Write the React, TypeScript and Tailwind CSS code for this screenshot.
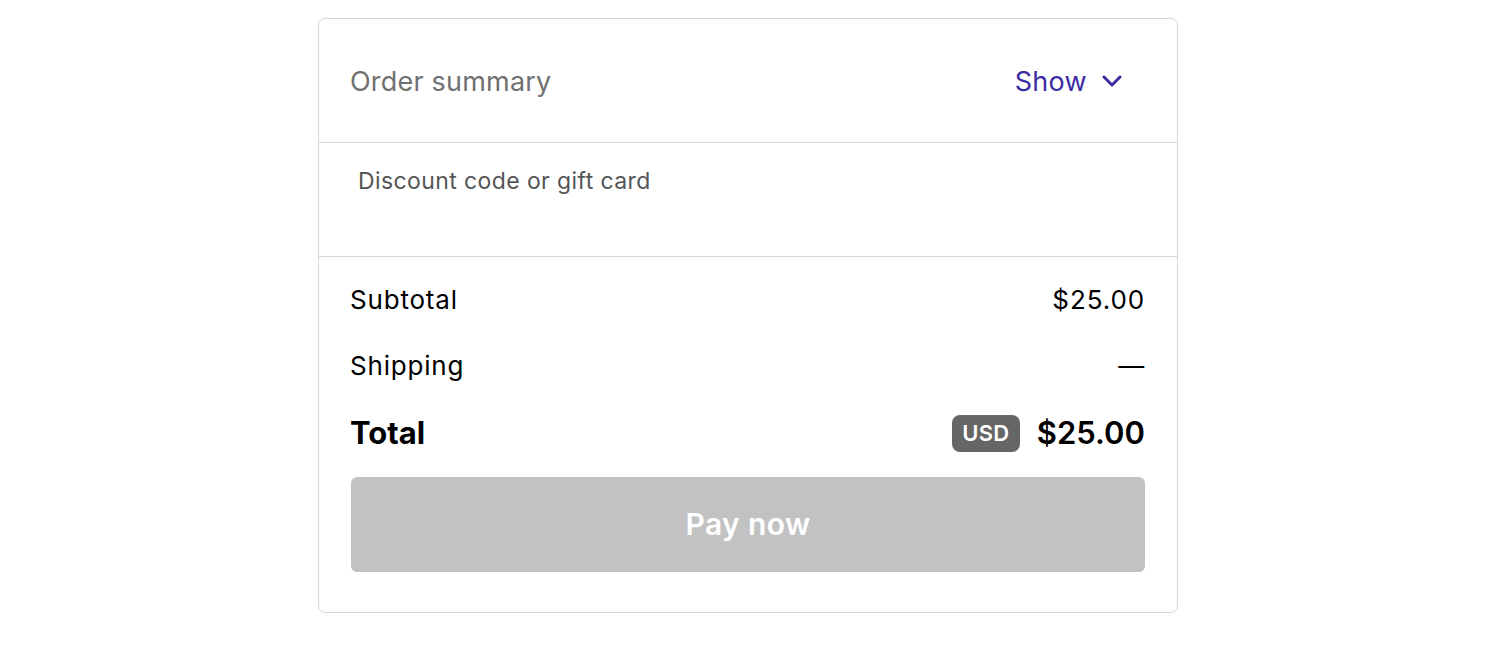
import React from "react";

export default function App() {
  return (
    <div className="min-h-[650px] w-[1500px] bg-white pt-[18px]" style={{ fontFamily: "Inter, 'Noto Sans', sans-serif" }}>
      <div className="ml-[318px] w-[860px] rounded-[7px] border border-[#d6d6d6] bg-white">
        <div className="flex h-[124px] items-center justify-between border-b border-[#d6d6d6] pl-[31px] pr-[55px] pt-[3px]">
          <span className="text-[27px] leading-[32px] tracking-[0.2px] text-[#707070]">Order summary</span>
          <div className="flex items-center gap-[15px] text-[#3b2ca3]">
            <span className="text-[27px] leading-[32px] tracking-[0.3px]">Show</span>
            <svg width="20" height="12" viewBox="0 0 20 12" fill="none" className="-mt-[3px]">
              <path d="M2 2 L10 10 L18 2" stroke="currentColor" strokeWidth="3" strokeLinecap="round" strokeLinejoin="round" />
            </svg>
          </div>
        </div>
        <div className="h-[114px] border-b border-[#d6d6d6] pl-[39px] pt-[23px]">
          <span className="text-[23px] leading-[30px] tracking-[0.4px] text-[#555555]">Discount code or gift card</span>
        </div>
        <div className="flex flex-col px-8 pb-[40px] pt-[24px]">
          <div className="flex h-[36px] items-center justify-between text-[26px] tracking-[0.9px] text-black">
            <span className="-ml-[1px] tracking-[0.8px]">Subtotal</span>
            <span>$25.00</span>
          </div>
          <div className="mt-[30px] flex h-[36px] items-center justify-between text-[26px] tracking-[0.8px] text-black">
            <span className="-ml-[1px]">Shipping</span>
            <span>—</span>
          </div>
          <div className="mt-[32px] flex h-[37px] items-center justify-between text-black">
            <span className="-ml-[1px] text-[31px] font-bold">Total</span>
            <div className="flex items-center gap-[17px]">
              <span className="flex h-[37px] w-[68px] items-center justify-center rounded-[8px] bg-[#666666] text-[22px] font-semibold tracking-[0.3px] text-white">USD</span>
              <span className="text-[31px] font-semibold">$25.00</span>
            </div>
          </div>
          <button className="mt-[25px] flex h-[95px] w-full items-center justify-center rounded-[6px] bg-[#c2c2c2] text-[30px] font-semibold tracking-[0.4px] text-white">
            Pay now
          </button>
        </div>
      </div>
    </div>
  );
}
